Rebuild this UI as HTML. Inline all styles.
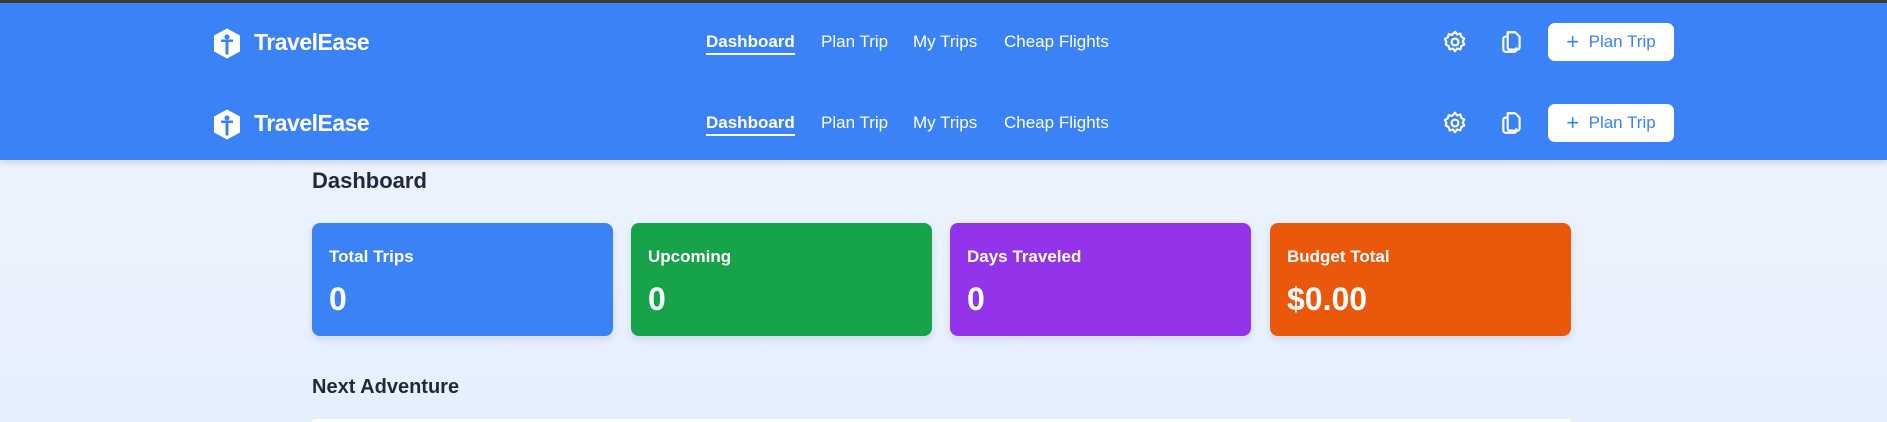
<!DOCTYPE html>
<html><head><meta charset="utf-8"><style>
*{margin:0;padding:0;box-sizing:border-box}
html{width:1887px;height:422px;overflow:hidden}
body{width:1887px;height:422px;overflow:hidden;font-family:"Liberation Sans",sans-serif;background:linear-gradient(180deg,#eef4fd,#e6f0fd);position:relative}
.top{position:absolute;left:0;top:0;width:1887px;height:3px;background:#3a3a3c}
.hdr{position:absolute;left:0;top:3px;width:1887px;height:157px;background:#3b82f6;box-shadow:0 3px 6px rgba(0,0,0,.12)}
.row{position:absolute;left:0;width:1887px;height:40px}
.logo{position:absolute;left:214px;top:6px}
.brand{position:absolute;left:254px;top:7px;color:#fff;font-weight:bold;font-size:23px;letter-spacing:-0.5px}
.nav{position:absolute;top:10px;color:#fff;font-size:17px}
.nav.a{font-weight:bold;border-bottom:2px solid #fff;padding-bottom:1px}
.ic{position:absolute;top:7px}
.btn{position:absolute;left:1548px;top:1px;width:126px;height:38px;background:#fff;border-radius:7px;color:#3b82f6;font-size:17px;line-height:38px;text-align:center}
h2{position:absolute;left:312px;font-size:22px;font-weight:bold;color:#1f2937}
.card{position:absolute;top:223px;width:301px;height:113px;border-radius:8px;color:#fff;box-shadow:0 4px 8px rgba(0,0,0,.1)}
.card .l{position:absolute;left:17px;top:24px;font-size:17px;font-weight:bold}
.card .v{position:absolute;left:17px;top:58px;font-size:32px;font-weight:bold}
.white{position:absolute;left:312px;top:419px;width:1259px;height:3px;background:#fff;border-radius:8px 8px 0 0}
</style></head><body>
<div class="top"></div>
<div class="hdr">
<div class="row" style="top:19px">
 <svg class="logo" width="26" height="31" viewBox="0 0 26 30"><path d="M13 0L26 7V23L13 30L0 23V7Z" fill="#fff"/><circle cx="13" cy="8.5" r="2.5" fill="#3b82f6"/><path d="M7 11h12v2.5h-4.5V26h-3V13.5H7z" fill="#3b82f6"/></svg>
 <div class="brand">TravelEase</div>
 <div class="nav a" style="left:706px">Dashboard</div>
 <div class="nav" style="left:821px">Plan Trip</div>
 <div class="nav" style="left:913px">My Trips</div>
 <div class="nav" style="left:1004px">Cheap Flights</div>
 <svg class="ic" style="left:1442px" width="26" height="26" viewBox="0 0 24 24" fill="none" stroke="#fff" stroke-width="2"><path d="M12 2.5l2 2.5 3-.8.8 3 2.7 1.5-1.3 2.8 1.3 2.8-2.7 1.5-.8 3-3-.8-2 2.5-2-2.5-3 .8-.8-3-2.7-1.5L4 12l-1.3-2.8 2.7-1.5.8-3 3 .8z" stroke-linejoin="round"/><circle cx="12" cy="12" r="3.2"/></svg>
 <svg class="ic" style="left:1499px" width="26" height="26" viewBox="0 0 24 24" fill="none" stroke="#fff" stroke-width="2" stroke-linejoin="round"><path d="M8 3h7l4 4v10a2 2 0 0 1-2 2H10a2 2 0 0 1-2-2z"/><path d="M8 7H6a2 2 0 0 0-2 2v10a2 2 0 0 0 2 2h8a2 2 0 0 0 2-2v-2"/></svg>
 <div class="btn"><span style="font-size:22px;vertical-align:-2px">+</span>&nbsp; Plan Trip</div>
</div>
<div class="row" style="top:100px">
 <svg class="logo" width="26" height="31" viewBox="0 0 26 30"><path d="M13 0L26 7V23L13 30L0 23V7Z" fill="#fff"/><circle cx="13" cy="8.5" r="2.5" fill="#3b82f6"/><path d="M7 11h12v2.5h-4.5V26h-3V13.5H7z" fill="#3b82f6"/></svg>
 <div class="brand">TravelEase</div>
 <div class="nav a" style="left:706px">Dashboard</div>
 <div class="nav" style="left:821px">Plan Trip</div>
 <div class="nav" style="left:913px">My Trips</div>
 <div class="nav" style="left:1004px">Cheap Flights</div>
 <svg class="ic" style="left:1442px" width="26" height="26" viewBox="0 0 24 24" fill="none" stroke="#fff" stroke-width="2"><path d="M12 2.5l2 2.5 3-.8.8 3 2.7 1.5-1.3 2.8 1.3 2.8-2.7 1.5-.8 3-3-.8-2 2.5-2-2.5-3 .8-.8-3-2.7-1.5L4 12l-1.3-2.8 2.7-1.5.8-3 3 .8z" stroke-linejoin="round"/><circle cx="12" cy="12" r="3.2"/></svg>
 <svg class="ic" style="left:1499px" width="26" height="26" viewBox="0 0 24 24" fill="none" stroke="#fff" stroke-width="2" stroke-linejoin="round"><path d="M8 3h7l4 4v10a2 2 0 0 1-2 2H10a2 2 0 0 1-2-2z"/><path d="M8 7H6a2 2 0 0 0-2 2v10a2 2 0 0 0 2 2h8a2 2 0 0 0 2-2v-2"/></svg>
 <div class="btn"><span style="font-size:22px;vertical-align:-2px">+</span>&nbsp; Plan Trip</div>
</div>
</div>
<h2 style="top:168px">Dashboard</h2>
<div class="card" style="left:312px;background:#3b82f6"><div class="l">Total Trips</div><div class="v">0</div></div>
<div class="card" style="left:631px;background:#16a34a"><div class="l">Upcoming</div><div class="v">0</div></div>
<div class="card" style="left:950px;background:#9333ea"><div class="l">Days Traveled</div><div class="v">0</div></div>
<div class="card" style="left:1270px;background:#ea580c"><div class="l">Budget Total</div><div class="v">$0.00</div></div>
<h2 style="top:376px;font-size:20px">Next Adventure</h2>
<div class="white"></div>
</body></html>
